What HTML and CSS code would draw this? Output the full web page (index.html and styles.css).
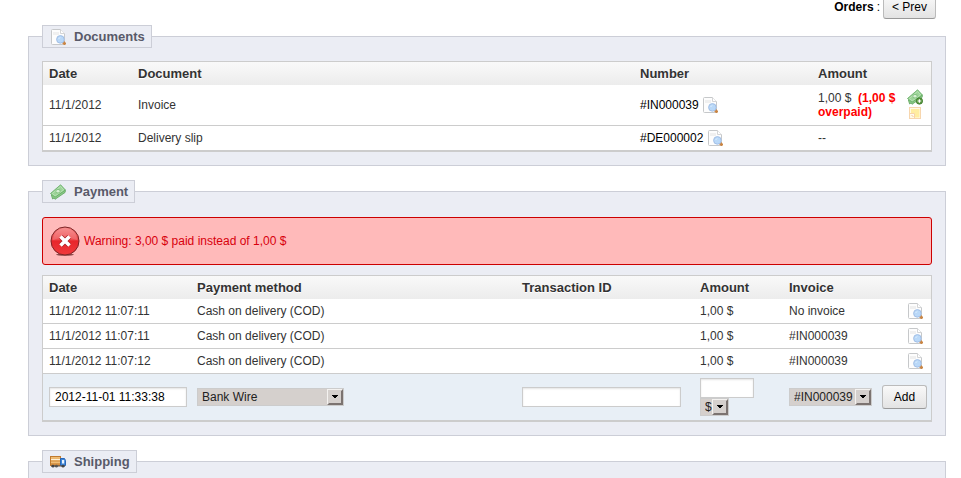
FILE: index.html
```html
<!DOCTYPE html>
<html lang="en">
<head>
  <meta charset="UTF-8">
  <meta name="viewport" content="width=device-width, initial-scale=1.0">
  <title>Orders</title>
  <link rel="stylesheet" href="styles.css">
</head>
<body>
  <!-- Shared icons -->
  <svg class="sprite" aria-hidden="true">
    <defs>
      <linearGradient id="red-ball" x1="0" y1="0" x2="0" y2="1">
        <stop offset="0" stop-color="#f58080"/>
        <stop offset="0.45" stop-color="#ee4a4c"/>
        <stop offset="0.5" stop-color="#e8262b"/>
        <stop offset="1" stop-color="#f0393c"/>
      </linearGradient>
      <linearGradient id="crate" x1="0" y1="0" x2="0" y2="1">
        <stop offset="0" stop-color="#f3c37c"/>
        <stop offset="1" stop-color="#d08a3c"/>
      </linearGradient>
    </defs>
    <symbol id="icon-details" viewBox="0 0 16 16">
      <path d="M1.5 1.5 Q1.5 .5 2.5 .5 H10.5 L14.5 4.5 V14.5 Q14.5 15.5 13.5 15.5 H2.5 Q1.5 15.5 1.5 14.5 Z" fill="#fdfdfd" stroke="#c6c8ca"/>
      <path d="M3 3 H9 V6 H3 Z" fill="#f0f0f0"/>
      <path d="M10.5 .5 V4.5 H14.5" fill="#fff" stroke="#d4d5d6"/>
      <path d="M13 13 L15.5 15.5" stroke="#c98544" stroke-width="3"/>
      <circle cx="10.4" cy="10.4" r="3.8" fill="#b9d8f8" stroke="#a3bfe6"/>
      <path d="M8.6 10 Q9 8.8 10.4 8.7" fill="none" stroke="#dceefe"/>
    </symbol>
    <symbol id="icon-money" viewBox="0 0 16 16">
      <path d="M1.4 11 L11 3 L15.5 6.5 L15 8.5 L5 15.3 L4 14 L2.6 15 Z" fill="#8ccb88" stroke="#5ea35d" stroke-width=".8"/>
      <path d="M.5 9.5 L10.6 .8 L15.4 6 L5 13.2 Z" fill="#9bd397" stroke="#5fa85f" stroke-width=".8"/>
      <path d="M2.3 9.6 L10.5 2.4 L13.6 5.9 L5.2 11.8 Z" fill="none" stroke="#c3e8bf" stroke-width=".7"/>
      <ellipse cx="8" cy="7.2" rx="2.2" ry="1.8" fill="#d6f0d2" stroke="#6fb56d" stroke-width=".7"/>
    </symbol>
    <symbol id="icon-money-add" viewBox="0 0 16 16">
      <use href="#icon-money"/>
      <circle cx="12.4" cy="12" r="3.2" fill="#5c9a44" stroke="#3f7a2c" stroke-width=".8"/>
      <path d="M12.4 10.2 V13.8 M10.6 12 H14.2" stroke="#fff" stroke-width="1.2"/>
    </symbol>
    <symbol id="icon-note" viewBox="0 0 16 16">
      <rect x="2.5" y="2.5" width="11" height="11" fill="#fffae6" stroke="#f7d6ae"/>
      <path d="M4 4 H12.5 V12.5 H8 V8.5 H4 Z" fill="#ffedA0"/>
      <path d="M3 8.5 H7.5 V13" fill="#fffaf0" stroke="#f7d3a8"/>
      <path d="M4.5 10 L6.5 12" stroke="#f3c79a" fill="none"/>
    </symbol>
    <symbol id="icon-truck" viewBox="0 0 16 16">
      <rect x=".5" y="2.5" width="10" height="9" fill="url(#crate)" stroke="#c07a2e"/>
      <path d="M1 5.5 H10" stroke="#fff0d6"/>
      <path d="M1 8.5 H10" stroke="#f0be78"/>
      <path d="M10.5 4.5 H14.5 L15.5 6.5 V11.5 H10.5 Z" fill="#3f86d8" stroke="#2867b8"/>
      <path d="M12 6 H14.2 V9.5 H12 Z" fill="#e8f3ff"/>
      <path d="M1 12 H15" stroke="#5c5148"/>
      <circle cx="3" cy="12.2" r="1.4" fill="#444"/>
      <circle cx="6.4" cy="12.2" r="1.4" fill="#555"/>
      <circle cx="13" cy="12.2" r="1.4" fill="#444"/>
    </symbol>
    <symbol id="icon-error" viewBox="0 0 30 30">
      <ellipse cx="15" cy="28.6" rx="9" ry="1.2" fill="#8c4a4a"/>
      <circle cx="15" cy="15" r="14" fill="url(#red-ball)" stroke="#7d2526"/>
      <path d="M3 14 A12 12 0 0 1 27 14 Q15 9 3 14 Z" fill="#fff" opacity=".14"/>
      <path d="M10.8 10.8 L19.2 19.2 M19.2 10.8 L10.8 19.2" stroke="#a81c20" stroke-width="5"/>
      <path d="M10.5 10.5 L19.5 19.5 M19.5 10.5 L10.5 19.5" stroke="#fff" stroke-width="3.6"/>
    </symbol>
  </svg>

  <div class="order-nav">
    <b>Orders</b> :
    <button type="button" class="button">&lt; Prev</button>
  </div>

  <!-- Documents -->
  <fieldset>
    <legend><svg class="icon"><use href="#icon-details"/></svg>Documents</legend>
    <table class="table documents">
      <colgroup>
        <col class="col-date">
        <col>
        <col class="col-number">
        <col class="col-amount">
        <col class="col-icons">
      </colgroup>
      <thead>
        <tr>
          <th>Date</th>
          <th>Document</th>
          <th>Number</th>
          <th>Amount</th>
          <th></th>
        </tr>
      </thead>
      <tbody>
        <tr class="invoice-line">
          <td>11/1/2012</td>
          <td>Invoice</td>
          <td><a href="#">#IN000039 <svg class="icon"><use href="#icon-details"/></svg></a></td>
          <td class="amount">1,00 $&nbsp; <b class="overpaid">(1,00 $ overpaid)</b></td>
          <td class="icons">
            <a href="#" aria-label="Enter payment"><svg class="icon"><use href="#icon-money-add"/></svg></a>
            <a href="#" aria-label="Add note"><svg class="icon"><use href="#icon-note"/></svg></a>
          </td>
        </tr>
        <tr>
          <td>11/1/2012</td>
          <td>Delivery slip</td>
          <td><a href="#">#DE000002 <svg class="icon"><use href="#icon-details"/></svg></a></td>
          <td class="amount">--</td>
          <td></td>
        </tr>
      </tbody>
    </table>
  </fieldset>

  <!-- Payment -->
  <fieldset>
    <legend><svg class="icon"><use href="#icon-money"/></svg>Payment</legend>
    <p class="error"><svg class="error-icon"><use href="#icon-error"/></svg>Warning: 3,00 $ paid instead of 1,00 $</p>
    <form>
      <table class="table payments">
        <colgroup>
          <col class="col-datetime">
          <col>
          <col class="col-transaction">
          <col class="col-amount">
          <col class="col-invoice">
          <col class="col-action">
        </colgroup>
        <thead>
          <tr>
            <th>Date</th>
            <th>Payment method</th>
            <th>Transaction ID</th>
            <th>Amount</th>
            <th>Invoice</th>
            <th></th>
          </tr>
        </thead>
        <tbody>
          <tr>
            <td>11/1/2012 11:07:11</td>
            <td>Cash on delivery (COD)</td>
            <td></td>
            <td>1,00 $</td>
            <td>No invoice</td>
            <td class="action"><a href="#" aria-label="Details"><svg class="icon"><use href="#icon-details"/></svg></a></td>
          </tr>
          <tr>
            <td>11/1/2012 11:07:11</td>
            <td>Cash on delivery (COD)</td>
            <td></td>
            <td>1,00 $</td>
            <td>#IN000039</td>
            <td class="action"><a href="#" aria-label="Details"><svg class="icon"><use href="#icon-details"/></svg></a></td>
          </tr>
          <tr>
            <td>11/1/2012 11:07:12</td>
            <td>Cash on delivery (COD)</td>
            <td></td>
            <td>1,00 $</td>
            <td>#IN000039</td>
            <td class="action"><a href="#" aria-label="Details"><svg class="icon"><use href="#icon-details"/></svg></a></td>
          </tr>
          <tr class="new-payment">
            <td><input type="text" class="input-date" aria-label="Date" value="2012-11-01 11:33:38"></td>
            <td>
              <select class="select-method" aria-label="Payment method">
                <option>Bank Wire</option>
              </select>
            </td>
            <td><input type="text" class="input-transaction" aria-label="Transaction ID"></td>
            <td>
              <input type="text" class="input-amount" aria-label="Amount">
              <select class="select-currency" aria-label="Currency">
                <option>$</option>
              </select>
            </td>
            <td>
              <select class="select-invoice" aria-label="Invoice">
                <option>#IN000039</option>
              </select>
            </td>
            <td class="action"><button type="submit" class="button">Add</button></td>
          </tr>
        </tbody>
      </table>
    </form>
  </fieldset>

  <!-- Shipping -->
  <fieldset>
    <legend><svg class="icon"><use href="#icon-truck"/></svg>Shipping</legend>
  </fieldset>
</body>
</html>
```
FILE: styles.css
```css
html {
  overflow: hidden;
}

body {
  margin: 0;
  padding: 0 15px 0 28px;
  background-color: #fff;
  color: #333;
  font-family: "Liberation Sans", Arial, Helvetica, sans-serif;
  font-size: 12px;
  line-height: 14px;
}

a {
  color: #000;
  text-decoration: none;
}

.sprite {
  position: absolute;
  width: 0;
  height: 0;
}

.icon {
  width: 16px;
  height: 16px;
  vertical-align: -4px;
}

/* Previous / next order */
.order-nav {
  display: flex;
  justify-content: flex-end;
  align-items: center;
  gap: 3px;
  margin: -5px 10px 6px 0;
  color: #000;
}

.button {
  height: 24px;
  min-width: 45px;
  padding: 0 8px;
  border: 1px solid #bbb;
  border-bottom-color: #999;
  border-radius: 3px;
  background: linear-gradient(#f9f9f9, #e3e3e3);
  color: #000;
  font-family: inherit;
  font-size: 12px;
  cursor: pointer;
}

/* Panels */
fieldset {
  min-width: 0;
  margin: 0 0 14px;
  padding: 13px;
  border: 1px solid #ccced7;
  background-color: #ebedf4;
}

legend {
  display: flex;
  align-items: center;
  gap: 8px;
  box-sizing: border-box;
  height: 23px;
  padding: 0 6px 0 7px;
  border: 1px solid #ccced7;
  background-color: #ebedf4;
  color: #585a69;
  font-size: 13px;
  font-weight: bold;
}

/* Tables */
.table {
  width: 100%;
  table-layout: fixed;
  border: 1px solid #ccc;
  border-bottom-width: 2px;
  border-spacing: 0;
  background-color: #fff;
}

.table th {
  height: 23px;
  padding: 0 6px;
  background: linear-gradient(#f9f9f9, #ececec);
  font-size: 13px;
  text-align: left;
  text-shadow: 0 1px 0 #fff;
}

.table td {
  height: 24px;
  padding: 0 6px;
  border-bottom: 1px solid #ccc;
}

.table tr:last-child td {
  border-bottom: none;
}

.col-date,
.col-amount {
  width: 89px;
}

.col-number,
.col-transaction {
  width: 178px;
}

.col-icons {
  width: 30px;
}

.col-datetime {
  width: 148px;
}

.col-invoice {
  width: 93px;
}

.col-action {
  width: 55px;
}

.table .invoice-line td {
  height: 40px;
}

.table .amount {
  padding-right: 0;
}

.overpaid {
  color: #f00;
}

.table .icons {
  padding: 0 0 0 6px;
}

.icons a {
  display: block;
  height: 16px;
  line-height: 16px;
}

.icons .icon {
  display: block;
}

.table .action {
  padding: 0 4px 0 6px;
  text-align: right;
}

.action a {
  padding-right: 4px;
}

/* Warning box */
.error {
  display: flex;
  align-items: center;
  gap: 4px;
  box-sizing: border-box;
  min-height: 48px;
  margin: 1px 0 10px;
  padding: 0 7px;
  border: 1px solid #c00;
  border-radius: 3px;
  background-color: #ffbaba;
  color: #d8000c;
}

.error-icon {
  width: 30px;
  height: 30px;
}

/* New payment row */
.table .new-payment td {
  height: 46px;
  background-color: #e8eff6;
}

.new-payment input,
.new-payment select {
  display: block;
  box-sizing: border-box;
  margin: 0;
  border: 1px solid #ccc;
  border-radius: 0;
  font-family: inherit;
  font-size: 12px;
}

.new-payment input {
  height: 20px;
  padding: 0 5px;
  background-color: #fff;
  box-shadow: inset 0 1px 2px #e4e4e4;
  color: #000;
}

.new-payment select {
  appearance: none;
  height: 18px;
  padding: 0 16px 0 4px;
  background: #d5d0cd url("data:image/svg+xml,%3Csvg xmlns='http://www.w3.org/2000/svg' width='16' height='16'%3E%3Cpath fill='%237b7370' d='M0 0h16v16H0z'/%3E%3Cpath fill='%23f4f2f0' d='M0 0h16l-2 2v12H2l-2 2z'/%3E%3Cpath fill='%23d5d0cd' d='M1 1h13v13H1z'/%3E%3Cpath d='M5 6h6v1h-1v1H9v1H7V8H6V7H5z'/%3E%3C/svg%3E") no-repeat right center;
  color: #222;
}

.new-payment .input-date {
  width: 138px;
}

.new-payment .input-transaction {
  width: 159px;
}

.new-payment .input-amount {
  width: 54px;
}

.new-payment .select-method {
  width: 147px;
}

.new-payment .select-currency {
  width: 29px;
}

.new-payment .select-invoice {
  width: 83px;
}
```
